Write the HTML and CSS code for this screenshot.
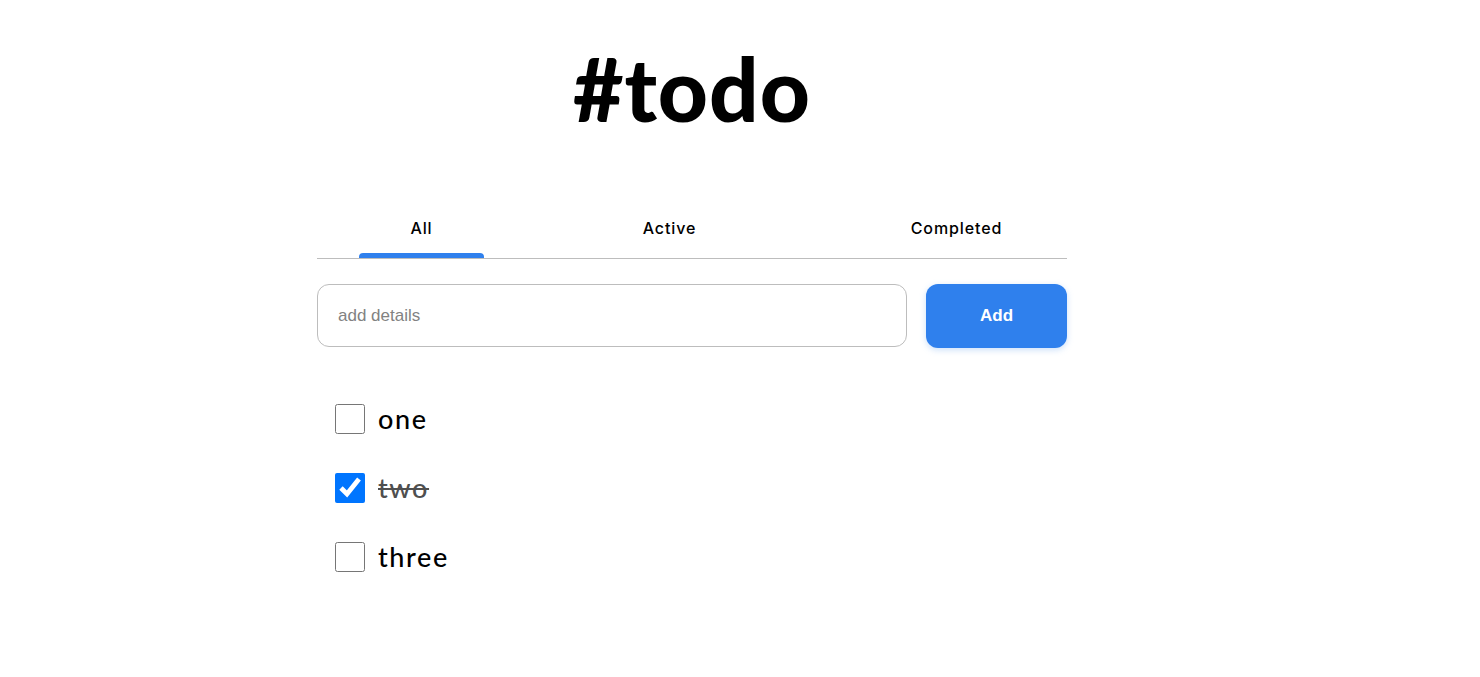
FILE: index.html
```html
<!DOCTYPE html>
<html>
<head>
<meta charset="utf-8">
<link rel="stylesheet" href="styles.css">
</head>
<body>
<main class="app">
  <h1 class="title">#todo</h1>
  <nav class="tabs">
    <div class="tab tab-all is-current">All</div>
    <div class="tab tab-active">Active</div>
    <div class="tab tab-completed">Completed</div>
  </nav>
  <form class="add-row">
    <input class="add-input" type="text" placeholder="add details">
    <button class="add-btn" type="button">Add</button>
  </form>
  <ul class="list">
    <li class="item"><input class="check" type="checkbox"><span class="label">one</span></li>
    <li class="item done"><input class="check" type="checkbox" checked><span class="label">two</span></li>
    <li class="item"><input class="check" type="checkbox"><span class="label">three</span></li>
  </ul>
</main>
</body>
</html>
```
FILE: styles.css
```css
html, body {
  margin: 0;
  padding: 0;
  background: #fff;
}
body {
  font-family: "Lato", "Noto Sans", sans-serif;
  color: #000;
}
.app {
  width: 750px;
  margin-left: 317px;
  padding-top: 34px;
}
.title {
  margin: 0;
  text-align: center;
  font-family: "Lato", sans-serif;
  font-weight: 900;
  font-size: 87px;
  line-height: 110px;
  letter-spacing: 1px;
}
.tabs {
  display: flex;
  margin-top: 54px;
  border-bottom: 1px solid #bdbdbd;
  height: 60px;
}
.tab {
  width: 125px;
  text-align: center;
  font-family: "Inter", sans-serif;
  font-weight: 500;
  font-size: 16px;
  line-height: 20px;
  letter-spacing: 0.9px;
  padding-top: 20px;
  box-sizing: border-box;
  position: relative;
}
.tab-all { margin-left: 42px; }
.tab-active { margin-left: 123px; }
.tab-completed { margin-left: 162px; }
.tab.is-current::after {
  content: "";
  position: absolute;
  left: 0;
  right: 0;
  bottom: 0;
  height: 5px;
  background: #2f80ed;
  border-radius: 4px 4px 0 0;
}
.add-row {
  display: flex;
  gap: 19px;
  margin: 25px 0 0;
}
.add-input {
  flex: 1;
  height: 63px;
  box-sizing: border-box;
  border: 1px solid #bdbdbd;
  border-radius: 12px;
  padding: 0 20px;
  font-family: "Liberation Sans", Arial, sans-serif;
  font-size: 17px;
  color: #333;
  outline: none;
}
.add-input::placeholder {
  color: #828282;
}
.add-btn {
  width: 141px;
  height: 64px;
  border: none;
  border-radius: 12px;
  background: #2f80ed;
  color: #fff;
  font-family: "Liberation Sans", Arial, sans-serif;
  font-weight: 700;
  font-size: 17px;
  box-shadow: 0 2px 6px rgba(127, 177, 243, 0.4);
}
.list {
  list-style: none;
  margin: 36px 0 0;
  padding: 0 0 0 18px;
}
.item {
  display: flex;
  align-items: center;
  height: 69px;
}
.check {
  width: 30px;
  height: 30px;
  margin: 0 13px 0 0;
  accent-color: #0075ff;
}
.label {
  font-family: "Lato", sans-serif;
  font-size: 27px;
  font-weight: 500;
  letter-spacing: 1.6px;
}
.done .label {
  text-decoration: line-through;
  color: #4f4f4f;
}
```
